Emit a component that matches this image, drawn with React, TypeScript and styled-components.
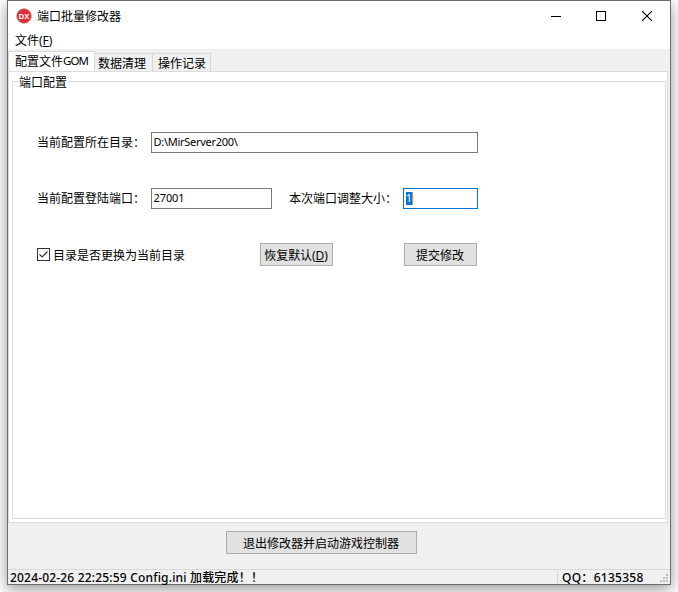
import React from "react";
import styled, { createGlobalStyle } from "styled-components";

const Global = createGlobalStyle`
  * { box-sizing: border-box; }
  body {
    margin: 0;
    background: #fff;
    overflow: hidden;
    font-family: "Noto Sans CJK SC", sans-serif;
    font-size: 12px;
    color: #000;
  }
`;

const Desktop = styled.div`
  width: 678px;
  height: 592px;
  padding: 0 7px;
  overflow: hidden;
`;

const Window = styled.div`
  width: 664px;
  height: 585px;
  border: 1px solid #6d6d6d;
  background: #f0f0f0;
  box-shadow: 0 4px 14px rgba(0, 0, 0, 0.42);
  display: flex;
  flex-direction: column;
`;

const Text = styled.span<{ $latin?: boolean; $size?: number; $track?: number; $lift?: number; $weight?: number }>`
  font-family: ${(p) => (p.$latin ? '"Noto Sans", "Noto Sans CJK SC", sans-serif' : '"Noto Sans CJK SC", sans-serif')};
  font-size: ${(p) => p.$size ?? 12}px;
  font-weight: ${(p) => p.$weight ?? 400};
  letter-spacing: ${(p) => p.$track ?? 0}px;
  line-height: 16px;
  padding-bottom: ${(p) => p.$lift ?? 0}px;
  white-space: pre;
`;

const TitleBar = styled.header`
  height: 30px;
  flex: none;
  background: #fff;
  display: flex;
  align-items: center;
  padding-left: 8px;
`;

const AppIcon = styled.svg`
  width: 16px;
  height: 16px;
  margin-right: 5px;
`;

const Controls = styled.div`
  margin-left: auto;
  display: flex;
`;

const ControlButton = styled.div`
  width: 46px;
  height: 28px;
  display: grid;
  place-items: center;
`;

const MenuBar = styled.nav`
  height: 18px;
  flex: none;
  background: #fff;
  display: flex;
  align-items: center;
  padding: 2px 0 0 7px;
`;

const TabStrip = styled.div`
  height: 22px;
  flex: none;
  display: flex;
  align-items: flex-end;
`;

const Tab = styled.div<{ $active?: boolean; $width: number; $inset: number }>`
  width: ${(p) => p.$width}px;
  height: ${(p) => (p.$active ? 21 : 18)}px;
  background: ${(p) => (p.$active ? "#fff" : "#f0f0f0")};
  border: 1px solid #d9d9d9;
  border-bottom: 0;
  border-left-width: ${(p) => (p.$active ? 1 : 0)}px;
  margin-bottom: ${(p) => (p.$active ? -1 : 0)}px;
  display: flex;
  align-items: center;
  padding-left: ${(p) => p.$inset}px;
`;

const Page = styled.main`
  width: 660px;
  height: 452px;
  flex: none;
  background: #fff;
  border: 1px solid #dcdcdc;
  padding: 0 1px 0 3px;
`;

const Group = styled.fieldset`
  width: 654px;
  height: 447px;
  margin: 0;
  min-width: 0;
  border: 1px solid #dcdcdc;
  padding: 0 0 0 24px;
`;

const Legend = styled.legend`
  margin-left: -18px;
  padding: 2px 1px 0 0;
  height: 18px;
  display: flex;
  align-items: center;
`;

const Row = styled.div<{ $gap: number; $height: number }>`
  margin-top: ${(p) => p.$gap}px;
  height: ${(p) => p.$height}px;
  display: flex;
  align-items: center;
`;

const Caption = styled.div<{ $width: number; $inset?: number }>`
  width: ${(p) => p.$width}px;
  padding-left: ${(p) => p.$inset ?? 0}px;
  flex: none;
  display: flex;
`;

const Field = styled.div<{ $width: number; $focused?: boolean }>`
  width: ${(p) => p.$width}px;
  height: 21px;
  flex: none;
  border: 1px solid ${(p) => (p.$focused ? "#0078d7" : "#7a7a7a")};
  background: #fff;
  display: flex;
  align-items: center;
  padding-left: ${(p) => (p.$focused ? 2 : 1.5)}px;
`;

const Selection = styled.span`
  height: 13px;
  width: 7px;
  background: #0078d7;
  color: #fff;
  border-right: 1px solid #ff8728;
  display: flex;
  align-items: center;
  justify-content: center;
`;

const CheckBox = styled.div`
  width: 13px;
  height: 13px;
  border: 1px solid #333;
  margin-right: 3px;
  display: grid;
  place-items: center;
`;

const Button = styled.div<{ $width: number; $nudge?: number }>`
  width: ${(p) => p.$width}px;
  height: 23px;
  flex: none;
  border: 1px solid #adadad;
  background: #e1e1e1;
  display: flex;
  align-items: center;
  justify-content: center;
  padding: ${(p) => p.$nudge ?? 1}px 1px 0 0;
`;

const Key = styled.span`
  text-decoration: underline;
  text-underline-offset: 1px;
  text-decoration-thickness: 1px;
`;

const Footer = styled.div`
  height: 46px;
  flex: none;
  padding: 8px 0 0 218px;
`;

const StatusBar = styled.footer`
  height: 15px;
  border-top: 1px solid #d7d7d7;
  display: flex;
`;

const StatusPane = styled.div<{ $width: number; $divider?: boolean }>`
  width: ${(p) => p.$width}px;
  height: 14px;
  flex: none;
  border-right: ${(p) => (p.$divider ? "1px solid #d7d7d7" : "0")};
  padding-left: ${(p) => (p.$divider ? 2 : 4)}px;
  display: flex;
`;

const Grip = styled.svg`
  width: 11px;
  height: 11px;
  margin-top: 2px;
`;

const gripDots = [[6, 0], [3, 3], [6, 3], [0, 6], [3, 6], [6, 6]];

export default function App() {
  return (
    <>
      <Global />
      <Desktop>
        <Window>
          <TitleBar>
            <AppIcon viewBox="0 0 16 16">
              <circle cx="8" cy="8" r="7.3" fill="#df3038" stroke="#b5868a" strokeWidth=".8" />
              <text x="8" y="10.6" textAnchor="middle" fontFamily="Liberation Sans" fontSize="8" fontWeight="700" fill="#fff" textLength="10.5" lengthAdjust="spacingAndGlyphs">DX</text>
            </AppIcon>
            <Text $lift={1}>端口批量修改器</Text>
            <Controls>
              <ControlButton>
                <svg width="12" height="10"><path d="M2 5.5h10" stroke="#000" /></svg>
              </ControlButton>
              <ControlButton>
                <svg width="10" height="10"><rect x=".5" y=".5" width="9" height="9" fill="none" stroke="#000" /></svg>
              </ControlButton>
              <ControlButton>
                <svg width="10" height="10"><path d="M0 0L10 10M10 0L0 10" stroke="#000" strokeWidth="1.1" /></svg>
              </ControlButton>
            </Controls>
          </TitleBar>
          <MenuBar>
            <Text $latin>文件(<Key>F</Key>)</Text>
          </MenuBar>
          <TabStrip>
            <Tab $active $width={87} $inset={6}>
              <Text $lift={2}>配置文件</Text>
              <Text $latin $size={11.5} $track={-0.95} $lift={2}>GOM</Text>
            </Tab>
            <Tab $width={58} $inset={3}><Text>数据清理</Text></Tab>
            <Tab $width={58} $inset={5}><Text>操作记录</Text></Tab>
          </TabStrip>
          <Page>
            <Group>
              <Legend><Text>端口配置</Text></Legend>
              <Row $gap={42} $height={21}>
                <Caption $width={114}><Text $lift={2}>当前配置所在目录：</Text></Caption>
                <Field $width={327}><Text $latin $size={11} $track={-0.28} $lift={2}>D:\MirServer200\</Text></Field>
              </Row>
              <Row $gap={35} $height={21}>
                <Caption $width={114}><Text $lift={2}>当前配置登陆端口：</Text></Caption>
                <Field $width={121}><Text $latin $size={11} $track={-0.1} $lift={2}>27001</Text></Field>
                <Caption $width={131} $inset={17}><Text $lift={2}>本次端口调整大小：</Text></Caption>
                <Field $width={75} $focused><Selection><Text $latin $size={11} $lift={1}>1</Text></Selection></Field>
              </Row>
              <Row $gap={34} $height={23}>
                <CheckBox>
                  <svg width="11" height="11"><path d="M1.5 5.3L4.2 8L9.5 2.5" fill="none" stroke="#333" strokeWidth="1.2" /></svg>
                </CheckBox>
                <Caption $width={207}><Text>目录是否更换为当前目录</Text></Caption>
                <Button $width={73} $nudge={2}><Text $latin $track={-0.1}>恢复默认(<Key>D</Key>)</Text></Button>
                <Caption $width={71} />
                <Button $width={73}><Text>提交修改</Text></Button>
              </Row>
            </Group>
          </Page>
          <Footer>
            <Button $width={191}><Text>退出修改器并启动游戏控制器</Text></Button>
          </Footer>
          <StatusBar>
            <StatusPane $width={550} $divider><Text $latin $track={0.18} $weight={500}>2024-02-26 22:25:59 Config.ini 加载完成！！</Text></StatusPane>
            <StatusPane $width={102}><Text $latin $track={0.27} $weight={500}>QQ：6135358</Text></StatusPane>
            <Grip>
              {gripDots.map(([x, y]) => <rect key={`${x}-${y}`} x={x} y={y + 2} width="2" height="2" fill="#bfbfbf" />)}
            </Grip>
          </StatusBar>
        </Window>
      </Desktop>
    </>
  );
}
